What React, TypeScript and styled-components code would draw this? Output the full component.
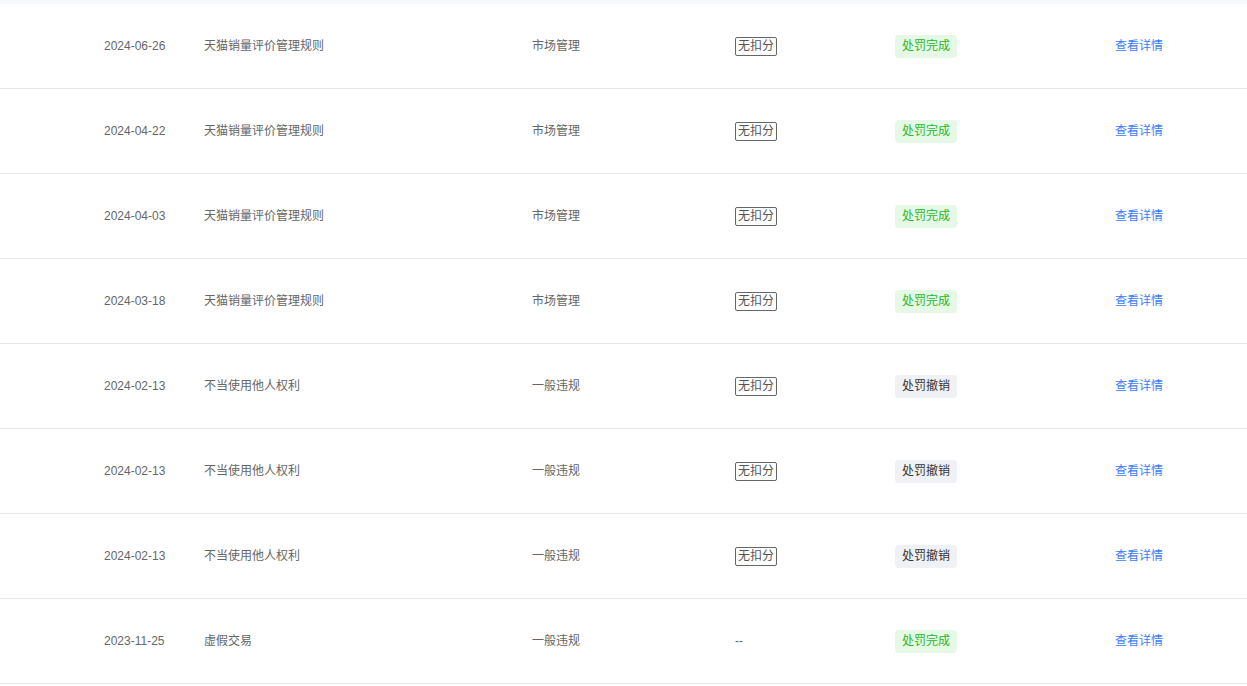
import React from "react";
import styled, { createGlobalStyle } from "styled-components";

const GlobalStyle = createGlobalStyle`
  html, body {
    margin: 0;
    padding: 0;
    background: #fff;
  }
  body {
    font-family: "Liberation Sans", "Noto Sans CJK SC", sans-serif;
    font-size: 12px;
    color: #666;
  }
`;

const Page = styled.div`
  width: 1247px;
  border-top: 4px solid #f7f8fa;
`;

const Row = styled.div`
  display: grid;
  grid-template-columns: 104px 100px 328px 203px 160px 220px 1fr;
  align-items: center;
  height: 84px;
  border-bottom: 1px solid #e8e8e8;
`;

const Cell = styled.div`
  line-height: 16px;
  color: #666;
  white-space: nowrap;
`;

const Score = styled.span`
  display: inline-block;
  border: 1px solid #666;
  border-radius: 2px;
  padding: 0 2px;
  line-height: 17px;
  color: #555;
`;

const Tag = styled.span<{ $done: boolean }>`
  display: inline-block;
  height: 23px;
  line-height: 23px;
  padding: 0 7px;
  border-radius: 4px;
  background: ${(p) => (p.$done ? "#e6f9e6" : "#f0f1f4")};
  color: ${(p) => (p.$done ? "#25b82a" : "#333")};
`;

const Link = styled.a`
  color: #3a7bff;
  text-decoration: none;
  cursor: pointer;
`;

type Record = {
  date: string;
  rule: string;
  kind: string;
  deduct: boolean;
  done: boolean;
};

const records: Record[] = [
  { date: "2024-06-26", rule: "天猫销量评价管理规则", kind: "市场管理", deduct: true, done: true },
  { date: "2024-04-22", rule: "天猫销量评价管理规则", kind: "市场管理", deduct: true, done: true },
  { date: "2024-04-03", rule: "天猫销量评价管理规则", kind: "市场管理", deduct: true, done: true },
  { date: "2024-03-18", rule: "天猫销量评价管理规则", kind: "市场管理", deduct: true, done: true },
  { date: "2024-02-13", rule: "不当使用他人权利", kind: "一般违规", deduct: true, done: false },
  { date: "2024-02-13", rule: "不当使用他人权利", kind: "一般违规", deduct: true, done: false },
  { date: "2024-02-13", rule: "不当使用他人权利", kind: "一般违规", deduct: true, done: false },
  { date: "2023-11-25", rule: "虚假交易", kind: "一般违规", deduct: false, done: true },
];

export default function App() {
  return (
    <>
      <GlobalStyle />
      <Page>
        {records.map((r, i) => (
          <Row key={i}>
            <span />
            <Cell>{r.date}</Cell>
            <Cell>{r.rule}</Cell>
            <Cell>{r.kind}</Cell>
            <Cell>{r.deduct ? <Score>无扣分</Score> : "--"}</Cell>
            <Cell>
              <Tag $done={r.done}>{r.done ? "处罚完成" : "处罚撤销"}</Tag>
            </Cell>
            <Cell>
              <Link>查看详情</Link>
            </Cell>
          </Row>
        ))}
      </Page>
    </>
  );
}
